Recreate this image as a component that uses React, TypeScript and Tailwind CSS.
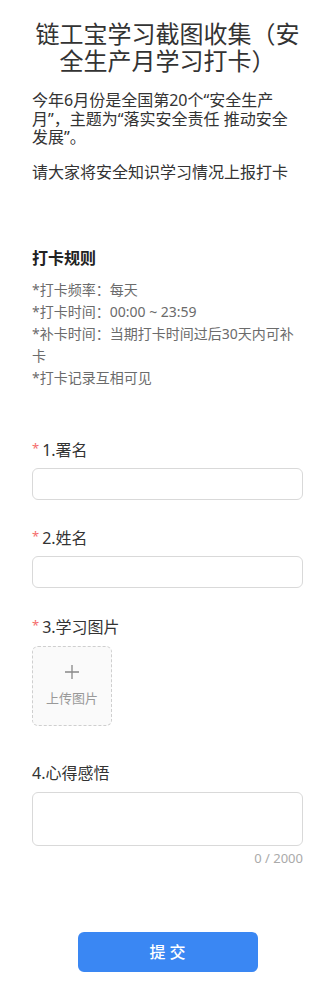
export default function App() {
  const font = { fontFamily: '"Noto Sans", "Noto Sans CJK SC", sans-serif' };
  return (
    <div style={font} className="min-h-screen bg-white px-8 pt-[20px] pb-4 text-[#333]">
      <h1 className="text-center text-[24px] leading-[27px] font-normal text-[#333]">
        链工宝学习截图收集（安全生产月学习打卡）
      </h1>

      <p className="mt-[17px] text-[16px] leading-[18.5px]">
        今年6月份是全国第20个“安全生产月”，主题为“落实安全责任 推动安全发展”。
      </p>
      <p className="mt-[16.5px] text-[16px] leading-[18.5px]">请大家将安全知识学习情况上报打卡</p>

      <h2 className="mt-[65px] text-[16px] leading-[22px] font-bold text-[#222]">打卡规则</h2>
      <div className="mt-[10px] text-[14px] leading-[22px] text-[#6b6b6b]">
        <p>*打卡频率：每天</p>
        <p>*打卡时间：00:00 ~ 23:59</p>
        <p>*补卡时间：当期打卡时间过后30天内可补卡</p>
        <p>*打卡记录互相可见</p>
      </div>

      <div className="mt-[50px] flex flex-col">
        <Label required text="1.署名" />
        <input className="mt-[7px] h-[32px] w-full rounded-[6px] border border-[#d9d9d9] px-3 outline-none" />

        <div className="mt-[27px]" />
        <Label required text="2.姓名" />
        <input className="mt-[7px] h-[32px] w-full rounded-[6px] border border-[#d9d9d9] px-3 outline-none" />

        <div className="mt-[28px]" />
        <Label required text="3.学习图片" />
        <div className="mt-[8px] flex h-[80px] w-[80px] flex-col items-center justify-center rounded-[6px] border border-dashed border-[#cfcfcf] bg-[#fafafa]">
          <svg width="16" height="16" viewBox="0 0 16 16" className="text-[#888]">
            <path d="M8 1v14M1 8h14" stroke="currentColor" strokeWidth="1.3" fill="none" />
          </svg>
          <span className="mt-[9px] text-[13px] leading-[18px] text-[#999]">上传图片</span>
        </div>

        <div className="mt-[36px]" />
        <Label text="4.心得感悟" />
        <textarea className="mt-[8px] h-[54px] w-full resize-none rounded-[6px] border border-[#d9d9d9] px-3 py-2 outline-none" />
        <div className="mt-[3px] text-right text-[13px] leading-[18px] text-[#aaa]">0 / 2000</div>
      </div>

      <div className="mt-[65px] flex justify-center">
        <button className="h-[40px] w-[180px] rounded-[6px] bg-[#3a87f3] text-[16px] font-medium text-white">
          提 交
        </button>
      </div>
    </div>
  );
}

function Label({ text, required }: { text: string; required?: boolean }) {
  return (
    <div className="flex items-center text-[16px] leading-[22px] text-[#333]">
      {required && <span className="mr-[3px] -mt-[4px] text-[13px] text-[#f56c6c]">*</span>}
      <span>{text}</span>
    </div>
  );
}
